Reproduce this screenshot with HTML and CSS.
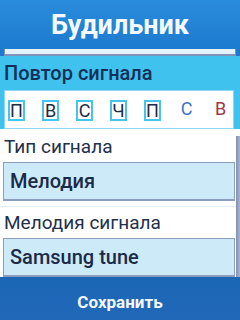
FILE: index.html
```html
<!DOCTYPE html>
<html lang="ru">
<head>
    <meta charset="UTF-8">
    <title>Будильник</title>
    <link rel="stylesheet" href="styles.css">
</head>
<body>
    <div class="screen">
        <div class="header">
            <h1>Будильник</h1>
            <div class="prev-field"></div>
        </div>

        <div class="repeat">
            <div class="label label-bold">Повтор сигнала</div>
            <div class="days">
                <span class="day on">П</span>
                <span class="day on">В</span>
                <span class="day on">С</span>
                <span class="day on">Ч</span>
                <span class="day on">П</span>
                <span class="day sat">С</span>
                <span class="day sun">В</span>
            </div>
        </div>

        <div class="content">
            <div class="list">
                <div class="item">
                    <div class="label">Тип сигнала</div>
                    <div class="field">Мелодия</div>
                </div>
                <div class="item">
                    <div class="label">Мелодия сигнала</div>
                    <div class="field">Samsung tune</div>
                </div>
            </div>
            <div class="scrollbar"></div>
        </div>

        <div class="footer">Сохранить</div>
    </div>
</body>
</html>
```

FILE: styles.css
```css
body {
    margin: 0;
    font-family: Roboto, "Noto Sans", sans-serif;
    background-color: #ffffff;
}
.screen {
    width: 240px;
    height: 320px;
    overflow: hidden;
    display: flex;
    flex-direction: column;
}
.header {
    height: 57px;
    background: linear-gradient(#2a8cdc, #1b78cc);
    display: flex;
    flex-direction: column;
}
.header h1 {
    margin: 0;
    height: 49px;
    line-height: 50px;
    text-align: center;
    color: #f4f8ff;
    font-size: 27px;
    font-weight: bold;
}
.prev-field {
    height: 5px;
    margin: 0 4px;
    background-color: #e4f3fb;
    border: 1px solid #7f93b8;
    border-top: none;
    border-bottom-width: 2px;
}
.repeat {
    height: 74px;
    background-color: #3fc3ee;
    padding-top: 5px;
    box-sizing: border-box;
}
.label {
    font-size: 19px;
    line-height: 24px;
    color: #22304a;
    padding-left: 4px;
}
.label-bold {
    font-size: 20px;
    font-weight: 500;
    color: #143058;
}
.days {
    margin: 5px 6px 0 4px;
    height: 39px;
    background-color: #ffffff;
    border: 1px solid #8fd6f0;
    box-sizing: border-box;
    display: flex;
    align-items: center;
    padding-left: 3px;
    padding-top: 1px;
    gap: 17px;
}
.day {
    width: 17px;
    height: 21px;
    box-sizing: border-box;
    text-align: center;
    font-size: 18px;
    line-height: 18px;
    color: #1c2c48;
}
.day.on {
    border: 2px solid #46c4ec;
}
.day.sat {
    color: #3a72c8;
}
.day.sun {
    color: #9c3848;
}
.content {
    flex: 1;
    display: flex;
}
.list {
    flex: 1;
    padding-top: 6px;
}
.item + .item {
    margin-top: 5px;
    border-top: 1px solid #e2eef6;
    padding-top: 4px;
}
.field {
    margin: 3px 1px 0 3px;
    height: 39px;
    box-sizing: border-box;
    background-color: #cdeaf8;
    border: 1px solid #8c9dbd;
    border-bottom-width: 2px;
    font-size: 20px;
    font-weight: 500;
    line-height: 36px;
    padding-left: 6px;
    color: #1a2a48;
}
.scrollbar {
    width: 4px;
    margin-top: 7px;
    background: linear-gradient(90deg, #7f90b4, #a8b6d0);
}
.footer {
    height: 48px;
    background: linear-gradient(#1c66b6, #2268b8);
    color: #f4f8ff;
    text-align: center;
    font-size: 17px;
    font-weight: bold;
    line-height: 50px;
}
```
